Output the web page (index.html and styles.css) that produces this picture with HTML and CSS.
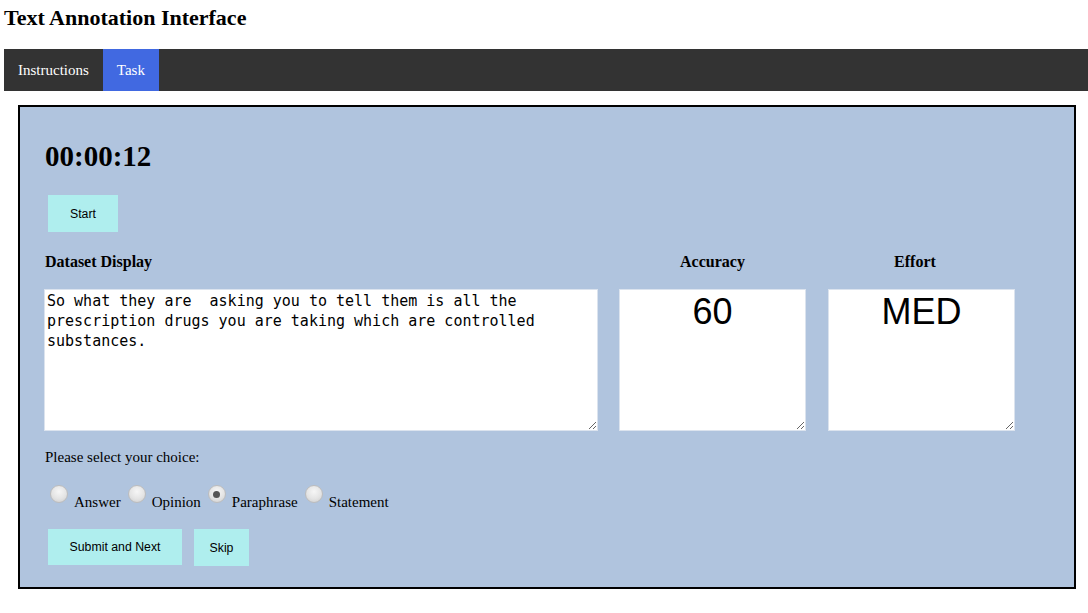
FILE: index.html
```html
<!DOCTYPE html>
<html>
<head>
<meta charset="utf-8">
<title>Text Annotation Interface</title>
<link rel="stylesheet" href="styles.css">
</head>
<body>
<h1 class="title">Text Annotation Interface</h1>
<nav class="navbar">
  <a class="tab">Instructions</a>
  <a class="tab active">Task</a>
</nav>
<main class="panel">
  <div class="timer">00:00:12</div>
  <button class="btn btn-start">Start</button>
  <div class="grid">
    <div class="label label-left">Dataset Display</div>
    <div class="label">Accuracy</div>
    <div class="label label-effort">Effort</div>
    <textarea class="box box-text">So what they are  asking you to tell them is all the prescription drugs you are taking which are controlled substances.</textarea>
    <textarea class="box box-big">60</textarea>
    <textarea class="box box-big">MED</textarea>
  </div>
  <p class="prompt">Please select your choice:</p>
  <div class="choices">
    <label class="choice"><input type="radio" name="c" class="radio"><span>Answer</span></label>
    <label class="choice"><input type="radio" name="c" class="radio"><span>Opinion</span></label>
    <label class="choice"><input type="radio" name="c" class="radio" checked><span>Paraphrase</span></label>
    <label class="choice"><input type="radio" name="c" class="radio"><span>Statement</span></label>
  </div>
  <div class="actions">
    <button class="btn btn-submit">Submit and Next</button>
    <button class="btn btn-skip">Skip</button>
  </div>
</main>
</body>
</html>
```
FILE: styles.css
```css
html, body {
  margin: 0;
  padding: 0;
  background: #ffffff;
}
body {
  padding-left: 4px;
  font-family: "Liberation Serif", "Times New Roman", serif;
  color: #000;
}
.title {
  margin: 0;
  padding-top: 6px;
  font-size: 22px;
  line-height: 24px;
  font-weight: bold;
}
.navbar {
  margin-top: 19px;
  height: 42px;
  background: #333333;
  display: flex;
}
.tab {
  display: flex;
  align-items: center;
  padding: 0 13px 0 14px;
  color: #ffffff;
  font-size: 15px;
  text-decoration: none;
}
.tab.active {
  background: #4169e1;
  margin-left: 1px;
  padding: 0 14px 0 14px;
}
.panel {
  display: flex;
  flex-direction: column;
  align-items: flex-start;
  margin: 14px 12px 0 14px;
  border: 2px solid #000;
  background: #b0c4de;
  padding: 0 0 21px 24px;
}
.timer {
  margin: 32px 0 0 1px;
  font-size: 29px;
  line-height: 34px;
  font-weight: bold;
}
.btn {
  border: none;
  background: #afeeee;
  font-family: "Liberation Sans", Arial, sans-serif;
  font-size: 12.3px;
  color: #000;
  padding: 0;
  height: 37px;
}
.btn-start {
  margin: 22px 0 0 4px;
  width: 70px;
}
.grid {
  margin-top: 20px;
  display: grid;
  grid-template-columns: 554px 187px 188px;
  column-gap: 21px;
  row-gap: 17px;
}
.grid .box:nth-of-type(3) {
  margin-left: 1px;
}
.label {
  font-size: 16px;
  line-height: 20px;
  font-weight: bold;
  text-align: center;
}
.label-left {
  text-align: left;
  padding-left: 1px;
}
.label-effort {
  padding-right: 12px;
}
.box {
  height: 142px;
  margin: 0;
  border: 1px solid #dbe3ee;
  background: #fff;
  box-sizing: border-box;
  color: #000;
}
.box-text {
  font-family: "DejaVu Sans Mono", "Liberation Mono", monospace;
  font-size: 15px;
  line-height: 20px;
  padding: 1px 2px;
}
.box-big {
  font-family: "Liberation Sans", Arial, sans-serif;
  font-size: 36px;
  line-height: 41px;
  text-align: center;
  padding: 1px 0 0;
}
.prompt {
  margin: 16px 0 0 1px;
  font-size: 15px;
  line-height: 20px;
}
.choices {
  margin-top: 18px;
  display: flex;
  align-items: flex-start;
  padding-left: 6px;
  gap: 7px;
}
.choice {
  display: flex;
  align-items: flex-start;
  gap: 6px;
  font-size: 15px;
}
.choice span {
  margin-top: 8px;
  line-height: 18px;
}
.radio {
  -webkit-appearance: none;
  appearance: none;
  margin: 0;
  width: 18px;
  height: 18px;
  border-radius: 50%;
  border: 1px solid #bdbdbd;
  background: radial-gradient(circle at 50% 35%, #f6f6f6 0%, #e4e4e4 55%, #cccccc 100%);
  box-sizing: border-box;
  position: relative;
}
.radio:checked::after {
  content: "";
  position: absolute;
  left: 4.5px;
  top: 4.5px;
  width: 7px;
  height: 7px;
  border-radius: 50%;
  background: #555;
}
.actions {
  margin: 18px 0 0 4px;
  display: flex;
  gap: 12px;
}
.btn-submit {
  width: 134px;
  height: 36px;
}
.btn-skip {
  width: 55px;
}
```
